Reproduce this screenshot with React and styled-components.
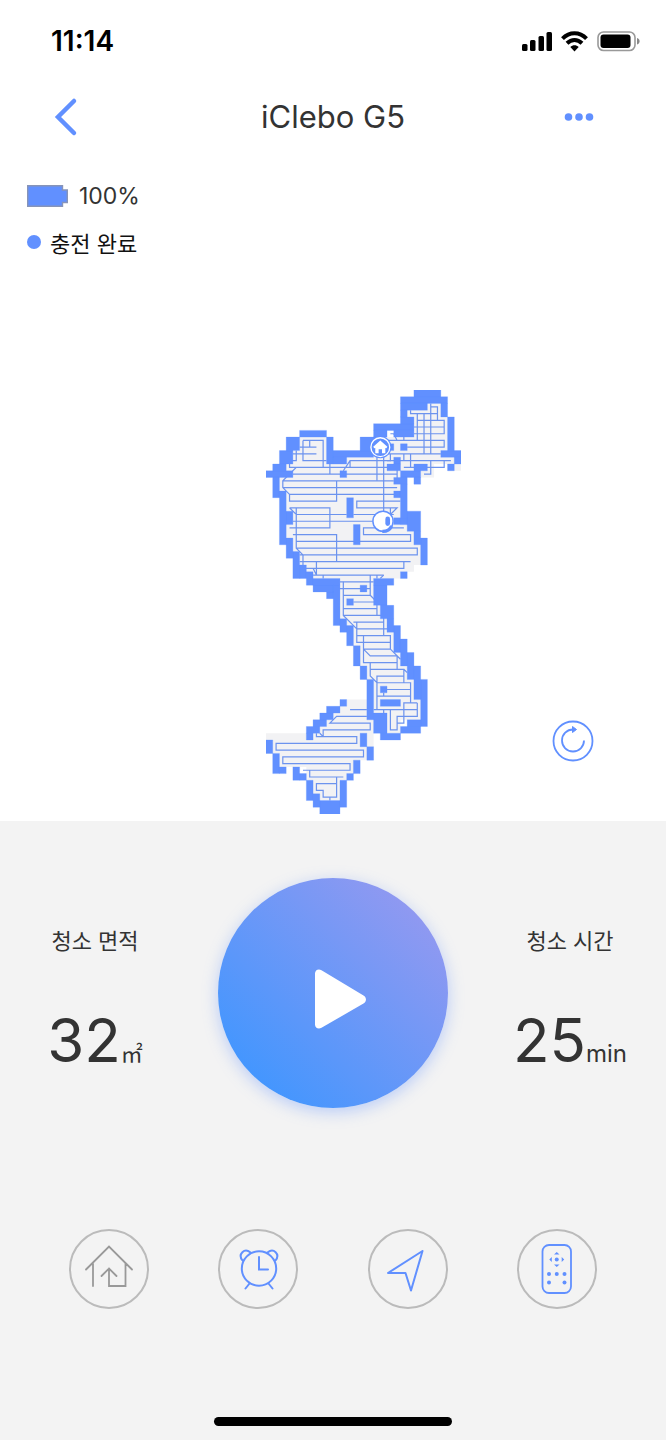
import styled, { createGlobalStyle } from 'styled-components'

const BLUE = '#6190ff'

// Floor plan in grid cells: x, y, width, height
const walls = [
    [5, 6, 4, 1], [3, 7, 2, 2], [2, 9, 2, 2], [1, 11, 2, 1], [0, 12, 4, 1], [1, 13, 1, 3],
    [9, 7, 1, 4], [10, 9, 6, 1], [10, 10, 2, 1], [14, 7, 3, 2],
    [22, 0, 4, 1], [20, 1, 7, 1], [20, 2, 4, 1], [26, 2, 1, 2], [20, 3, 1, 1], [20, 4, 2, 1],
    [16, 5, 6, 1], [16, 6, 2, 1], [19, 6, 3, 1], [27, 4, 1, 5], [26, 9, 3, 1], [28, 10, 1, 1],
    [27, 11, 1, 1], [20, 8, 1, 1], [18, 8, 1, 1], [19, 10, 1, 1], [18, 11, 2, 1],
    [22, 11, 2, 1], [20, 12, 3, 1], [22, 13, 1, 1], [19, 13, 2, 1], [11, 12, 1, 1],
    [2, 15, 1, 8], [3, 18, 1, 2], [3, 22, 1, 3], [4, 24, 1, 4], [5, 26, 1, 2], [6, 27, 1, 2],
    [7, 28, 4, 1], [7, 29, 3, 1], [12, 16, 1, 3], [13, 20, 1, 3], [14, 29, 1, 1],
    [20, 14, 1, 6], [19, 15, 1, 1], [21, 18, 2, 3], [19, 19, 2, 1], [22, 21, 1, 2], [23, 22, 1, 4],
    [20, 27, 1, 1], [16, 28, 3, 1], [16, 29, 2, 3], [17, 32, 2, 2], [18, 34, 1, 2],
    [19, 35, 1, 4], [20, 37, 1, 4], [21, 39, 1, 4], [22, 41, 1, 5], [23, 43, 1, 7],
    [21, 49, 2, 1], [20, 50, 3, 1], [10, 29, 1, 6], [9, 30, 1, 1], [11, 34, 1, 2], [12, 35, 1, 3],
    [13, 38, 1, 3], [14, 41, 1, 2], [15, 43, 1, 6], [16, 48, 2, 3], [17, 51, 3, 1],
    [12, 31, 1, 1], [17, 44, 1, 1], [17, 46, 3, 1],
    [11, 46, 1, 1], [9, 47, 2, 1], [8, 48, 2, 1], [7, 49, 2, 1], [6, 50, 2, 1], [6, 51, 1, 1],
    [0, 52, 1, 2], [1, 54, 1, 3], [2, 56, 1, 1], [4, 56, 1, 2], [5, 57, 1, 1], [6, 58, 1, 3],
    [7, 60, 1, 2], [8, 61, 3, 2], [11, 58, 1, 4], [12, 57, 1, 1], [13, 55, 1, 2],
    [14, 51, 1, 2], [15, 53, 1, 2],
]

const floor =
    'M5 7H9V11H12V10H16V7H22V4H21V3H24V2H26V4H27V9H28V10H29V12H27V11H25V13H23V12H20V18H21V20H22V22H23V26H22V27H20V28H16V32H17V34H18V36H19V39H20V41H21V43H22V46H23V49H20V51H17V48H16V49H16V53H16V55H14V57H12V58H11V61H7V58H6V56H2V54H0V51H7V50H8V49H10V47H12V46H15V43H14V41H13V38H12V35H11V28H7V27H5V24H4V22H3V15H2V11H4V9H5Z'

// Cleaning path, one entry per area of the home
const tracks = [
    'M5.5 7.5H8.5V11.5M5.5 7.5V10.5H9M5 8.5H7.5M6.5 7.5V8.5M4 9.5H7.5M4.5 9V10.5H3.5V11.5H19M4 12.5H19.5M2.5 13.5H19M2.5 14.5H19.5M4.5 11.5L2.5 13.5V14.5L3.5 15.5M9.5 11V12.5M10.5 13.5V16.5H3.5V15.5H19.5M11.5 12L12.5 10.5H18.5V9.5M12.5 10.5V11.5',
    'M3.5 17.5H9.5V20.5H3.5M3.5 17.5L4.5 18.5H12M4.5 17.5V23.5L5.5 24.5V26.5H7L7.5 27.5M4 19.5H16.5M4 21.5H10.5V25.5M4.5 22.5H21.5V21.5H14.5V20.5H20.5M4.5 23.5H22.5V24.5H5M5 25.5H21.5M5.5 26.5H20.5V25.5M7.5 25.5V27.5M7 27.5H17.5M8.5 27.5V28M11 28.5H16M13 18.5H19M20 16.5H13.5V17.5H19.5L18.5 18.5M18.5 17.5V18.5',
    'M21.5 3V3.5H25.5M22.5 3.5V7.5M23.5 3.5V9.5M24.5 2V9.5M24.5 2.5H25.5V4.5H26.5V5.5H22M22.5 4.5H26.5M22 6.5H26.5V5.5M18 7.5H26.5V8.5H21M18 9.5H26M18 10.5H27.5M20.5 7V7.5M18.5 6.5H19L19.5 7.5M20.5 9.5V10.5M21.5 9.5V11.5M20.5 11.5H26.5V10.5M24.5 10.5V12.5H23.5M16.5 9V13.5M17.5 9V18M19.5 11.5V13.5',
    'M10.5 28.5V29.5H15.5V27.5M11.5 28.5V33.5L13.5 35.5M15.5 29.5V30.5H11.5M15.5 30.5L16.5 31.5V33.5M13 31.5H16.5M11.5 32.5H16.5M11.5 33.5H17.5V36.5M13 34.5H17.5M13.5 34.5V37.5H18.5M13.5 35.5H18.5M13.5 36.5H18.5V38.5L20 40M14.5 36.5V38.5H18.5M14.5 38.5L15.5 39.5H19.5V41.5M14.5 38.5V40.5H19.5M15.5 40.5V42.5L16.5 43.5H21.5V46.5M15.5 41.5H20.5V43.5M20.5 41.5L21 42M16.5 47.5V42.5H20.5M18 44.5H21.5M16.5 45.5H21.5M17.5 45V45.5M22.5 46.5H20.5V49.5H19.5M22.5 46.5V48.5H19.5V50.5H18.5V47.5M16 47.5H22.5M17.5 47.5V48M16.5 27.5V28M17.5 27.5L17 28',
    'M12.5 47.5H15M15 48.5H10.5L9.5 49.5H15.5V50.5H8.5V51.5M7.5 51V51.5H13.5V52.5H1.5V53.5H14.5V54.5H2.5V55.5H12.5V56.5H5.5M6.5 56.5V57.5H11.5M10.5 57.5V60.5H8.5V59.5H7.5V58.5H10.5M9.5 60.5V61M8 51L8.5 51.5',
]

const StatusIcons = () => (
    <svg width='120' height='24' viewBox='0 0 120 24' aria-hidden='true'>
        <rect x='1' y='15' width='5.500' height='7' rx='1.5' />
        <rect x='9' y='11' width='5.500' height='11' rx='1.5' />
        <rect x='17.500' y='7' width='5.500' height='15' rx='1.5' />
        <rect x='25.500' y='3' width='5.500' height='19' rx='1.5' />
        <path
            fill='none'
            stroke='#000'
            strokeWidth='4'
            d='M41.500 9.600C48.500 2.500 58.500 2.500 65.500 9.600M46 14.200C50.500 9.800 56.500 9.800 61 14.200'
        />
        <path d='M53.500 22.500L49.300 18C51.800 15.800 55.200 15.800 57.700 18Z' />
        <rect
            x='77'
            y='3'
            width='37'
            height='18.500'
            rx='5.500'
            fill='none'
            stroke='#999'
            strokeWidth='1.600'
        />
        <rect x='79.500' y='5.500' width='30' height='13.500' rx='3' />
        <path fill='#888' d='M116 9C119.500 10 119.500 14.500 116 15.500Z' />
    </svg>
)

const FloorMap = () => (
    <svg
        width='195'
        height='424'
        viewBox='0 0 29 63'
        preserveAspectRatio='none'
        role='img'
        aria-label='청소 지도'
    >
        <path d={floor} fill='#f2f2f4' />
        <g fill='none' stroke='#6c93ee' strokeWidth='0.18'>
            {tracks.map(d => (
                <path key={d} d={d} />
            ))}
        </g>
        <path
            d={walls.map(([x, y, w, h]) => `M${x} ${y}h${w}v${h}h${-w}z`).join('')}
            fill={BLUE}
            stroke={BLUE}
            strokeWidth='0.04'
        />
        <circle cx='17' cy='8.500' r='1.650' fill={BLUE} />
        <circle cx='17' cy='8.500' r='1.400' fill={BLUE} stroke='#fff' strokeWidth='0.200' />
        <path
            fill='#fff'
            d='M17 7.500L15.950 8.450L16.100 8.650L16.250 8.600V9.400H16.750V8.800H17.250V9.400H17.750V8.600L17.900 8.650L18.050 8.450Z'
        />
        <circle cx='17.400' cy='19.500' r='1.500' fill='#fff' stroke={BLUE} strokeWidth='0.220' />
        <path
            fill='none'
            stroke={BLUE}
            strokeWidth='0.5'
            d='M17.300 21A1.500 1.500 0 0 0 18.700 20.200'
        />
        <rect x='17.750' y='18.800' width='0.700' height='1.400' rx='0.350' fill={BLUE} />
    </svg>
)

const HomeIcon = () => (
    <svg width='80' height='80' viewBox='0 0 80 80' fill='none' stroke='#999' strokeWidth='1.800'>
        <path
            strokeLinecap='round'
            d='M17 40.500L40 17.500L63 40.500M24 34.500V57M56.500 34.500V57H40V39.500M32.500 47L40 39.500L47.500 47'
        />
    </svg>
)

const AlarmIcon = () => (
    <svg width='80' height='80' viewBox='0 0 80 80' fill='none' stroke={BLUE} strokeWidth='2'>
        <circle cx='41' cy='39.500' r='17.200' />
        <path
            strokeLinecap='round'
            d='M41 28V40.500H50M31.500 54.500L27.500 59.500M50.500 54.500L54.500 59.500M24.500 31.500C19.500 25 26.500 18.500 32.500 23.500M49.500 23.500C55.500 18.500 62.500 25 57.500 31.500'
        />
    </svg>
)

const LocateIcon = () => (
    <svg width='80' height='80' viewBox='0 0 80 80' fill='none' stroke={BLUE} strokeWidth='2'>
        <path strokeLinejoin='round' d='M54.500 22L20 44H37.500L43 61.500Z' />
    </svg>
)

const RemoteIcon = () => (
    <svg width='80' height='80' viewBox='0 0 80 80' fill={BLUE}>
        <rect
            x='25.500'
            y='16'
            width='28.500'
            height='48'
            rx='6.500'
            fill='none'
            stroke={BLUE}
            strokeWidth='1.800'
        />
        <path d='M37 25.500L39.750 23L42.500 25.500ZM37 35.500L39.750 38L42.500 35.500ZM34.800 28L32.300 30.500L34.800 33ZM44.700 28L47.200 30.500L44.700 33Z' />
        <circle cx='39.750' cy='30.500' r='2' />
        <circle cx='32' cy='45' r='2' />
        <circle cx='39.750' cy='45' r='2' />
        <circle cx='47.500' cy='45' r='2' />
        <circle cx='32' cy='53.500' r='2' />
        <circle cx='47.500' cy='53.500' r='2' />
    </svg>
)

const App = () => {
    return (
        <Page>
            <GlobalStyle />
            <StatusBar>
                <Time>11:14</Time>
                <StatusIcons />
            </StatusBar>

            <Header>
                <IconButton aria-label='뒤로'>
                    <svg width='24' height='40' viewBox='0 0 24 40'>
                        <path
                            d='M20 4L4 20L20 36'
                            fill='none'
                            stroke={BLUE}
                            strokeWidth='4.500'
                            strokeLinecap='round'
                        />
                    </svg>
                </IconButton>
                <Title>iClebo G5</Title>
                <IconButton $end aria-label='더보기'>
                    <svg width='30' height='10' viewBox='0 0 30 10' fill={BLUE}>
                        <circle cx='4.500' cy='5' r='3.800' />
                        <circle cx='15' cy='5' r='3.800' />
                        <circle cx='25.500' cy='5' r='3.800' />
                    </svg>
                </IconButton>
            </Header>

            <RobotState>
                <StateRow $gap='11px'>
                    <svg width='41' height='22' viewBox='0 0 41 22' aria-hidden='true'>
                        <path
                            d='M.7.7H35.500V5H40.300V17.500H35.500V21.300H.7Z'
                            fill={BLUE}
                            stroke='#8794b8'
                            strokeWidth='1.400'
                        />
                    </svg>
                    <Percent>100%</Percent>
                </StateRow>
                <StateRow $gap='9px'>
                    <Dot />
                    <StateText>충전 완료</StateText>
                </StateRow>
            </RobotState>

            <MapArea>
                <FloorMap />
                <RefreshButton aria-label='새로고침'>
                    <svg width='42' height='42' viewBox='0 0 42 42' fill='none' stroke={BLUE}>
                        <circle cx='21' cy='21' r='19.500' strokeWidth='1.800' />
                        <path strokeWidth='1.800' d='M32 20.500A11 11 0 1 1 21 9.500H22.500' />
                        <path strokeWidth='1' fill={BLUE} d='M20.500 6.500L24.500 9.500L20.500 12.500Z' />
                    </svg>
                </RefreshButton>
            </MapArea>

            <Panel>
                <Summary>
                    <Stat $side='left'>
                        <StatLabel>청소 면적</StatLabel>
                        <StatValue>
                            32<AreaUnit>㎡</AreaUnit>
                        </StatValue>
                    </Stat>
                    <PlayButton aria-label='청소 시작'>
                        <svg width='230' height='230' viewBox='0 0 230 230'>
                            <path
                                fill='#fff'
                                d='M97 95.500C97 92 100.500 90.300 103.500 92.200L145.500 117.500C148.800 119.500 148.800 123.500 145.500 125.500L103.500 149.800C100.500 151.600 97 150 97 146.500Z'
                            />
                        </svg>
                    </PlayButton>
                    <Stat $side='right'>
                        <StatLabel>청소 시간</StatLabel>
                        <StatValue>
                            25<TimeUnit>min</TimeUnit>
                        </StatValue>
                    </Stat>
                </Summary>

                <Actions>
                    <ActionButton aria-label='충전대 복귀'>
                        <HomeIcon />
                    </ActionButton>
                    <ActionButton aria-label='예약'>
                        <AlarmIcon />
                    </ActionButton>
                    <ActionButton aria-label='위치'>
                        <LocateIcon />
                    </ActionButton>
                    <ActionButton aria-label='리모컨'>
                        <RemoteIcon />
                    </ActionButton>
                </Actions>

                <HomeIndicator />
            </Panel>
        </Page>
    )
}

const GlobalStyle = createGlobalStyle`
    * {
        box-sizing: border-box;
    }

    body {
        margin: 0;
        background-color: #fff;
        color: #333;
        font-family: Inter, 'Noto Sans CJK KR', sans-serif;
    }

    button {
        padding: 0;
        border: none;
        background: none;
        cursor: pointer;
    }

    svg {
        display: block;
        flex-shrink: 0;
    }
`

const Page = styled.div`
    display: flex;
    flex-direction: column;
    min-height: 100vh;
`

const StatusBar = styled.div`
    display: flex;
    justify-content: space-between;
    align-items: center;
    height: 82px;
    padding: 0 25px 0 51px;
`

const Time = styled.span`
    color: #000;
    font-size: 28px;
    font-weight: 600;
`

const Header = styled.header`
    display: grid;
    grid-template-columns: 1fr auto 1fr;
    align-items: center;
    height: 69px;
    padding: 0 54px;
`

const IconButton = styled.button`
    display: flex;
    align-items: center;
    justify-self: ${props => (props.$end ? 'end' : 'start')};
    height: 44px;
    margin-right: ${props => (props.$end ? '18px' : '0')};
`

const Title = styled.h1`
    margin: 0;
    font-size: 31px;
    font-weight: 400;
`

const RobotState = styled.div`
    display: flex;
    flex-direction: column;
    gap: 14px;
    padding: 29px 27px 0;
`

const StateRow = styled.div`
    display: flex;
    align-items: center;
    gap: ${props => props.$gap};
    height: 32px;
`

const Percent = styled.span`
    font-size: 23px;
`

const Dot = styled.span`
    width: 14px;
    height: 14px;
    border-radius: 50%;
    background-color: ${BLUE};
`

const StateText = styled.span`
    color: #111;
    font-size: 22px;
`

const MapArea = styled.div`
    position: relative;
    display: flex;
    justify-content: center;
    padding: 132px 0 7px 60px;
`

const RefreshButton = styled.button`
    position: absolute;
    right: 72px;
    bottom: 59px;
`

const Panel = styled.section`
    flex: 1;
    display: flex;
    flex-direction: column;
    align-items: center;
    padding: 57px 0 14px;
    background-color: #f3f3f3;
`

const Summary = styled.div`
    display: grid;
    grid-template-columns: 1fr 230px 1fr;
    width: 100%;
`

const Stat = styled.div`
    display: flex;
    flex-direction: column;
    align-items: center;
    padding: ${props =>
        props.$side == 'left' ? '47px 28px 0 0' : '47px 0 0 26px'};
`

const StatLabel = styled.span`
    font-size: 22px;
    line-height: 32px;
`

const StatValue = styled.span`
    display: flex;
    align-items: baseline;
    margin-top: 47px;
    font-size: 60px;
    line-height: 72px;
`

const AreaUnit = styled.span`
    font-family: 'Noto Sans CJK KR', sans-serif;
    font-size: 22px;
    line-height: 32px;
`

const TimeUnit = styled.span`
    font-size: 24px;
    line-height: 32px;
`

const PlayButton = styled.button`
    width: 230px;
    height: 230px;
    border-radius: 50%;
    background: linear-gradient(45deg, #3f96ff 10%, #9499f0 90%);
    box-shadow: 0 4px 16px rgba(97, 144, 255, 0.4);
`

const Actions = styled.nav`
    display: flex;
    justify-content: space-between;
    width: 100%;
    margin-top: 121px;
    padding: 0 69px;
`

const ActionButton = styled.button`
    display: flex;
    justify-content: center;
    align-items: center;
    width: 80px;
    height: 80px;
    border: 2px solid #bbb;
    border-radius: 50%;
`

const HomeIndicator = styled.div`
    width: 238px;
    height: 9px;
    margin-top: auto;
    border-radius: 5px;
    background-color: #000;
`

export default App
